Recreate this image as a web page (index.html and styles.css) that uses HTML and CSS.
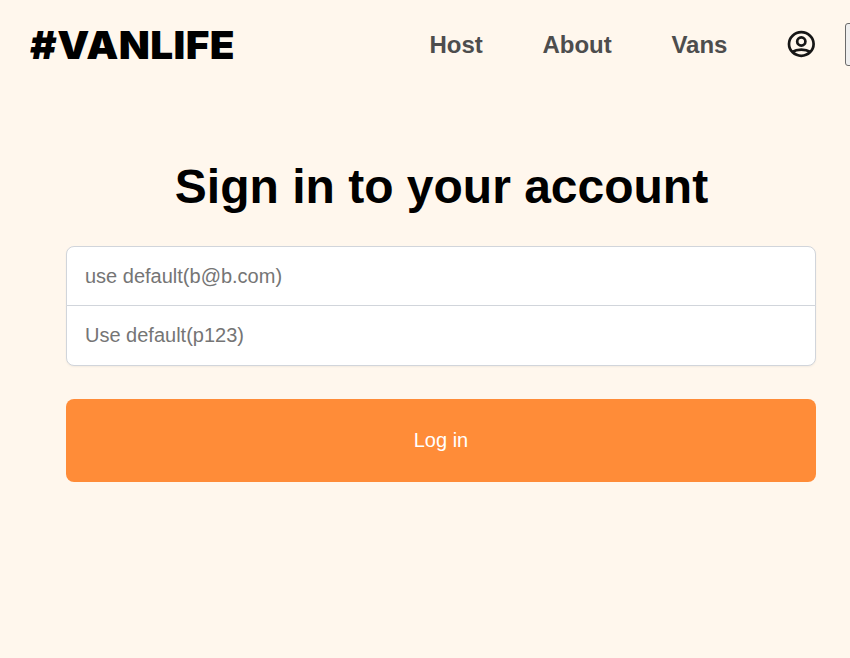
FILE: index.html
```html
<!DOCTYPE html>
<html lang="en">
<head>
<meta charset="utf-8">
<title>Van Life</title>
<link rel="stylesheet" href="styles.css">
</head>
<body>
<header>
  <a class="site-logo"><span>#VANLIFE</span></a>
  <nav>
    <a>Host</a><a>About</a><a>Vans</a>
    <svg class="login-icon" viewBox="0 0 28 28" fill="none" stroke="#161616" stroke-width="2.7"><ellipse cx="14.3" cy="14" rx="12.3" ry="11.8"/><circle cx="14.3" cy="11.5" r="4.1"/><path d="M5.3 22Q8.8 19.7 14.3 19.7T23.3 22"/></svg>
    <button class="logout" aria-label="Log out"></button>
  </nav>
</header>
<main>
  <h1>Sign in to your account</h1>
  <form class="login-form">
    <input type="email" placeholder="use default(b@b.com)">
    <input type="password" placeholder="Use default(p123)">
    <button type="button">Log in</button>
  </form>
</main>
</body>
</html>
```
FILE: styles.css
```css
* { box-sizing: border-box; }
body { margin: 0; height: 658px; overflow: hidden; background: #fff7ed; font-family: "Liberation Sans", Arial, sans-serif; }
header { display: flex; align-items: center; height: 90px; padding-left: 30px; }
.site-logo { width: 399.4px; flex: none; margin-top: -2px; font: 900 39px/47px Inter, sans-serif; letter-spacing: .4px; color: #000; }
.site-logo span { display: inline-block; transform: scaleX(1.037); transform-origin: left; }
nav { display: flex; align-items: center; flex: none; font-size: 24px; font-weight: 700; color: #4d4d4d; }
nav a { margin-right: 59.7px; }
.login-icon { width: 28px; height: 28px; flex: none; margin-top: -2px; }
.logout { width: 40px; height: 43px; margin: -1px 0 0 30px; border: 1px solid #6b6b6b; border-radius: 3px; background: #efefef; padding: 0; }
main { padding: 66px 33px 0 66px; }
h1 { margin: 0; text-align: center; font-size: 48px; line-height: 62px; }
.login-form { display: flex; flex-direction: column; margin: 28px 1px 0 0; }
input { height: 60px; padding: 0 18px; font: 20px "Liberation Sans", Arial, sans-serif; background: #fff; border: 1px solid #d1d5db; border-radius: 8px 8px 0 0; box-shadow: 0 1px 2px rgba(0,0,0,.05); }
input::placeholder { color: #757575; }
input + input { margin-top: -1px; height: 61px; border-radius: 0 0 8px 8px; }
.login-form button { height: 83px; margin-top: 33px; border: 0; border-radius: 8px; background: #ff8c38; color: #fff; font: 20px "Liberation Sans", Arial, sans-serif; }
```
